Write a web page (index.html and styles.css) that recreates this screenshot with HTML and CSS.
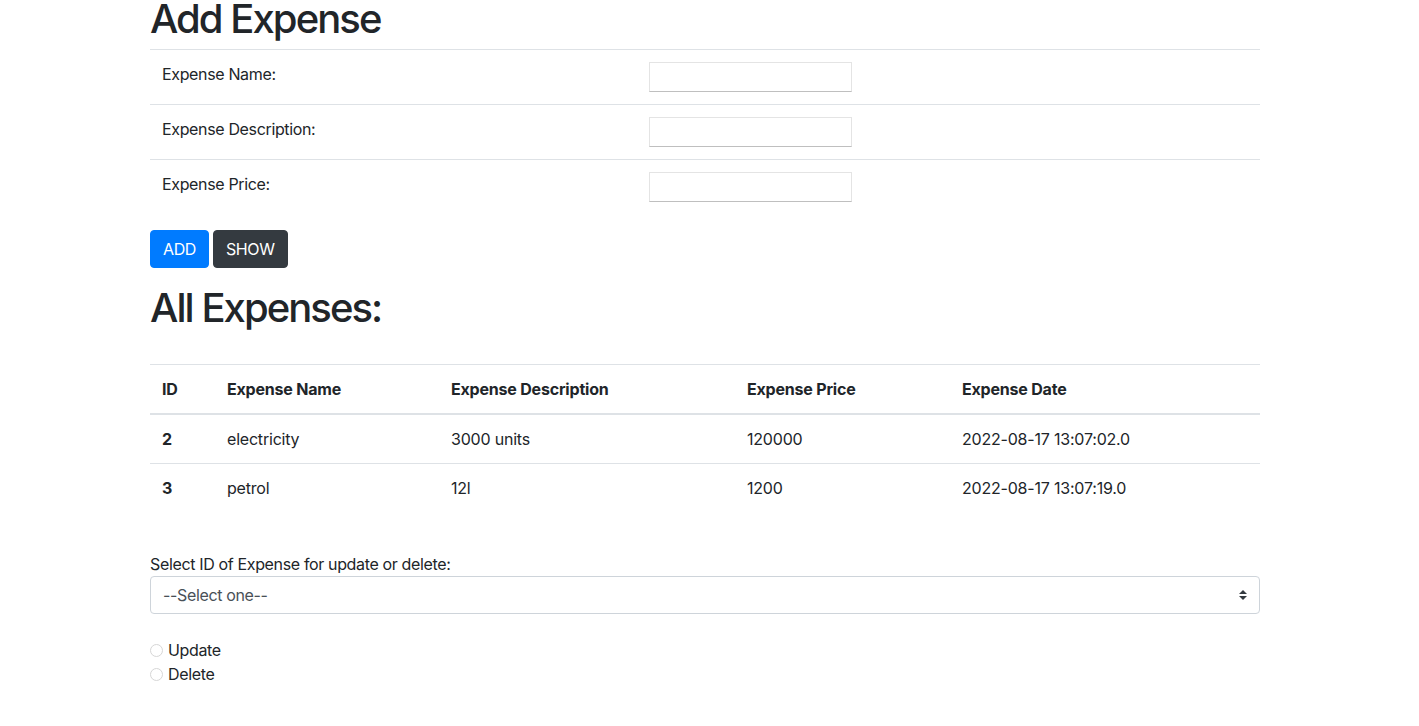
FILE: index.html
```html
<!DOCTYPE html>
<html lang="en">
<head>
<meta charset="utf-8">
<title>Expenses</title>
<link rel="stylesheet" href="styles.css">
</head>
<body>
<div class="container">
  <h1 class="title title-first">Add Expense</h1>
  <table class="form-table">
    <colgroup><col class="c-label"><col></colgroup>
    <tr>
      <td><label>Expense Name:</label></td>
      <td><input type="text" class="txt"></td>
    </tr>
    <tr>
      <td><label>Expense Description:</label></td>
      <td><input type="text" class="txt"></td>
    </tr>
    <tr>
      <td><label>Expense Price:</label></td>
      <td><input type="text" class="txt"></td>
    </tr>
  </table>
  <div class="btns">
    <button class="btn btn-primary">ADD</button>
    <button class="btn btn-dark">SHOW</button>
  </div>
  <h1 class="title title-second">All Expenses:</h1>
  <table class="data-table">
    <colgroup>
      <col class="w1"><col class="w2"><col class="w3"><col class="w4"><col class="w5">
    </colgroup>
    <thead>
      <tr><th>ID</th><th>Expense Name</th><th>Expense Description</th><th>Expense Price</th><th>Expense Date</th></tr>
    </thead>
    <tbody>
      <tr><th>2</th><td>electricity</td><td>3000 units</td><td>120000</td><td>2022-08-17 13:07:02.0</td></tr>
      <tr><th>3</th><td>petrol</td><td>12l</td><td>1200</td><td>2022-08-17 13:07:19.0</td></tr>
    </tbody>
  </table>
  <div class="sel-label">Select ID of Expense for update or delete:</div>
  <div class="sel-wrap">
    <select class="custom-select">
      <option>--Select one--</option>
      <option>2</option>
      <option>3</option>
    </select>
    <svg class="sel-arrow" width="8" height="10" viewBox="0 0 4 5"><path d="M2 0L0 2h4zm0 5L0 3h4z" fill="#343a40"/></svg>
  </div>
  <div class="radios">
    <label class="radio"><input type="radio" name="op"><span>Update</span></label>
    <label class="radio"><input type="radio" name="op"><span>Delete</span></label>
  </div>
</div>
</body>
</html>
```

FILE: styles.css
```css
* { box-sizing: border-box; }
html, body { margin: 0; padding: 0; background: #fff; }
body {
  font-family: Inter, "Liberation Sans", Arial, sans-serif;
  font-size: 16px;
  line-height: 1.5;
  color: #212529;
  letter-spacing: -0.35px;
}
.container {
  width: 1110px;
  margin-left: 150px;
}
.title {
  font-size: 40px;
  font-weight: 500;
  line-height: 48px;
  margin: 0;
  letter-spacing: -1.95px;
}
.title-first { margin-top: -5px; margin-bottom: 6px; }
.title-second { margin-top: 16px; margin-bottom: 32px; }

.form-table, .data-table {
  width: 100%;
  border-collapse: collapse;
  margin-bottom: 16px;
}
.form-table td {
  padding: 12px;
  vertical-align: top;
  border-top: 1px solid #dee2e6;
}
.c-label { width: 487px; }
.txt {
  display: block;
  width: 203px;
  height: 30px;
  margin: 0;
  padding: 2px 4px;
  border: 1px solid #e4e4e4;
  border-bottom-color: #bfbfbf;
  border-radius: 0;
  background: #fff;
  font: inherit;
}
.btns { display: flex; gap: 4px; }
.btn {
  font-family: inherit;
  font-size: 16px;
  line-height: 24px;
  letter-spacing: -0.4px;
  padding: 6px 12px;
  border: 1px solid transparent;
  border-radius: 4px;
  color: #fff;
  cursor: pointer;
}
.btn-primary { background: #007bff; border-color: #007bff; }
.btn-dark { background: #343a40; border-color: #343a40; }

.data-table { table-layout: fixed; }
.w1 { width: 65px; }
.w2 { width: 224px; }
.w3 { width: 296px; }
.w4 { width: 215px; }
.w5 { width: 310px; }
.data-table th, .data-table td {
  padding: 12px;
  text-align: left;
  vertical-align: top;
  border-top: 1px solid #dee2e6;
}
.data-table td { letter-spacing: -0.2px; }
.data-table th { font-weight: 700; letter-spacing: -0.2px; }
.data-table thead th {
  vertical-align: bottom;
  border-bottom: 2px solid #dee2e6;
}

.sel-label { margin-top: 40px; line-height: 24px; }
.sel-wrap { position: relative; margin-bottom: 24px; }
.custom-select {
  display: block;
  width: 100%;
  height: 38px;
  padding: 6px 28px 6px 12px;
  font-family: inherit;
  font-size: 16px;
  line-height: 24px;
  letter-spacing: -0.35px;
  color: #495057;
  background: #fff;
  border: 1px solid #ced4da;
  border-radius: 4px;
  -webkit-appearance: none;
  appearance: none;
}
.sel-arrow {
  position: absolute;
  right: 13px;
  top: 14px;
  pointer-events: none;
}
.radios { display: flex; flex-direction: column; }
.radio {
  display: flex;
  align-items: center;
  height: 24px;
}
.radio input {
  -webkit-appearance: none;
  appearance: none;
  width: 13px;
  height: 13px;
  margin: 1px 5px 0 0;
  border: 1px solid #d6d6d6;
  border-radius: 50%;
  background: #fff;
}
```
